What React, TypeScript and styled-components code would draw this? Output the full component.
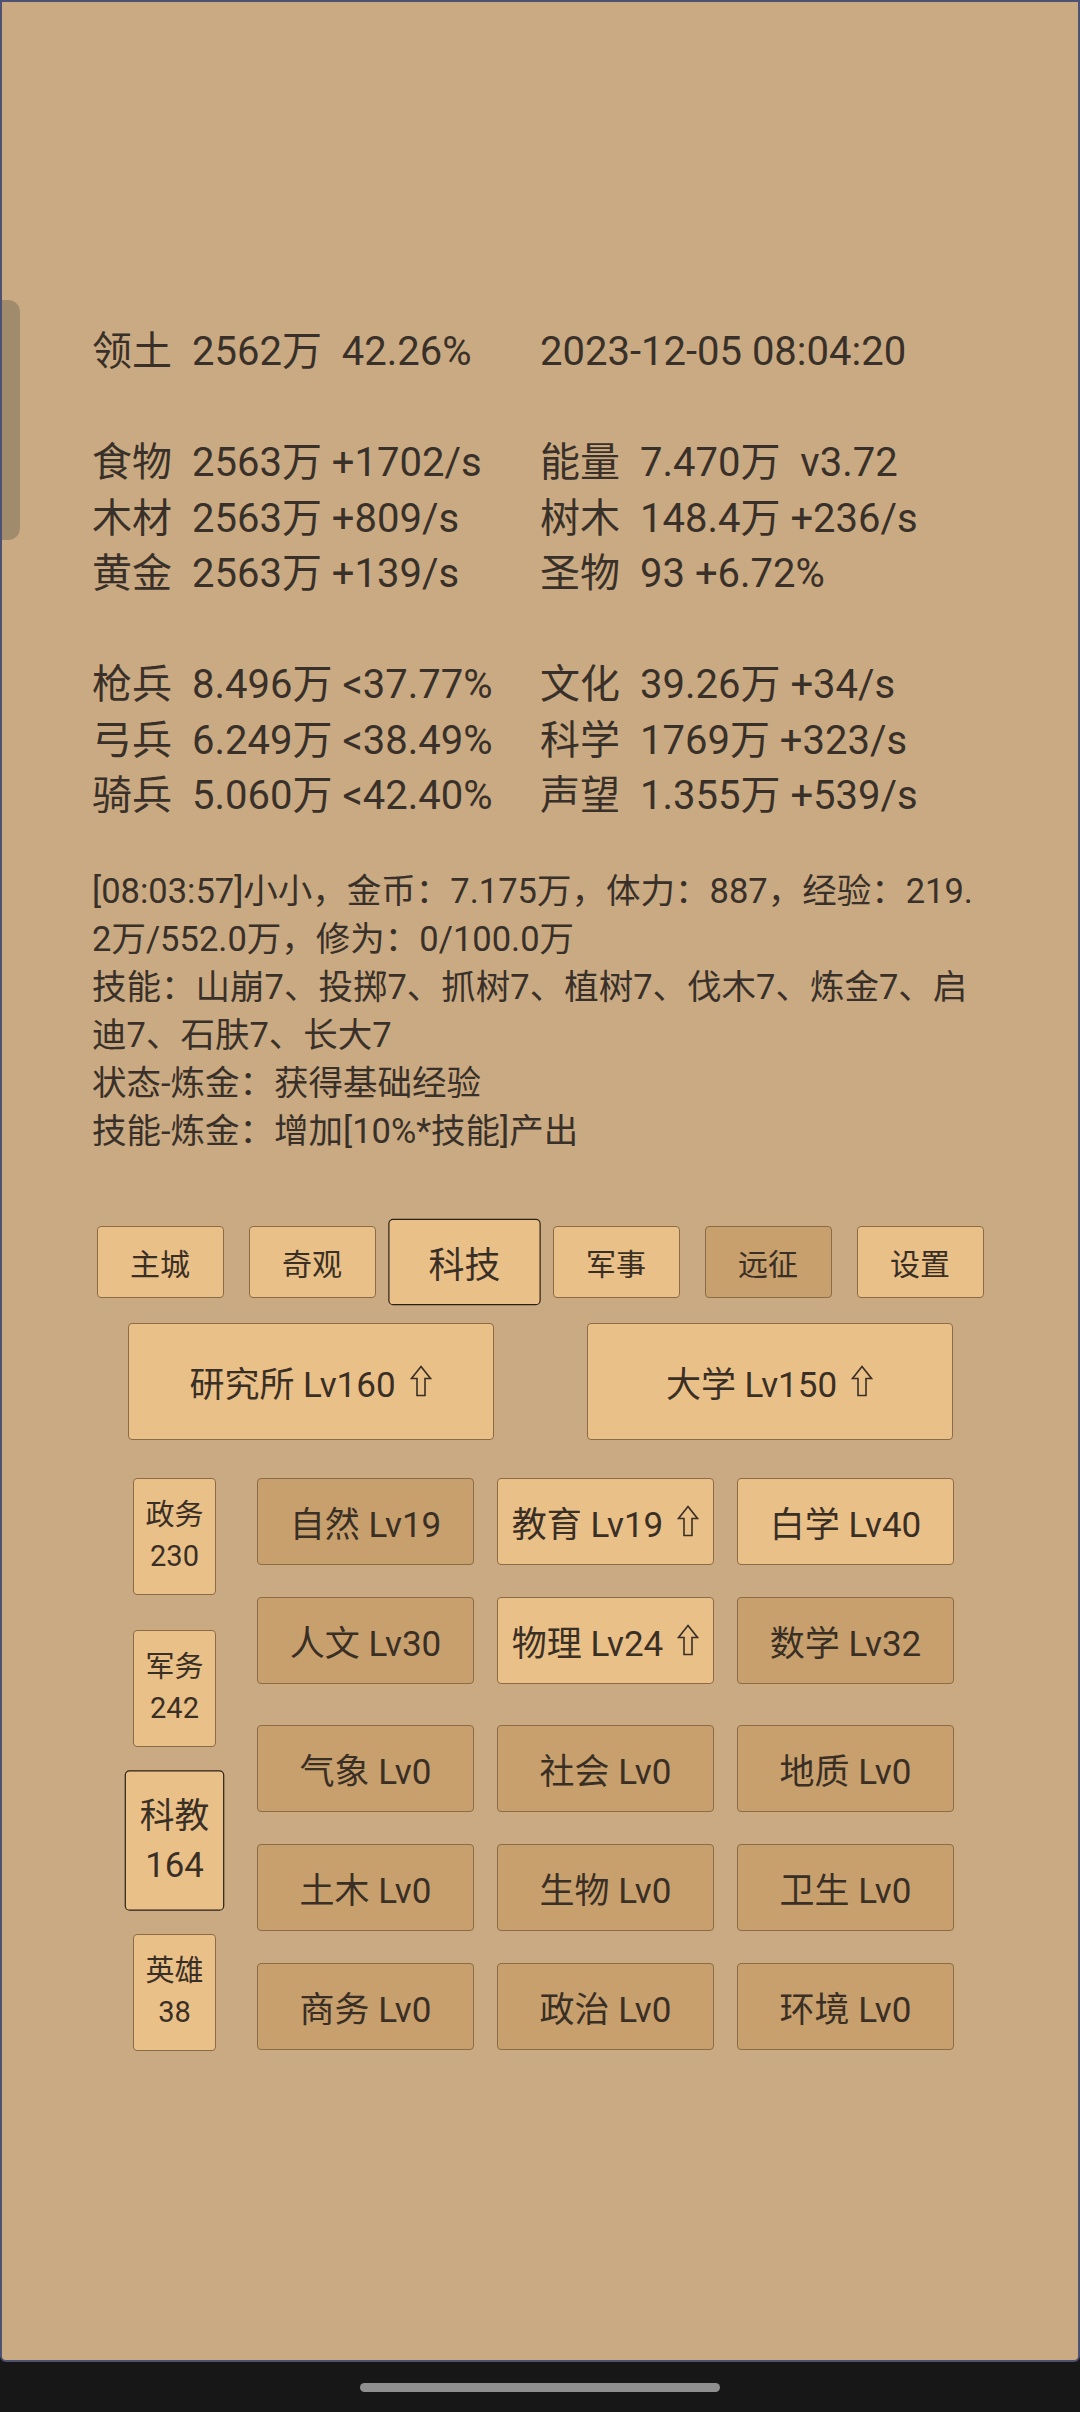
import React from "react";
import styled, { createGlobalStyle } from "styled-components";

const GlobalStyle = createGlobalStyle`
  html, body {
    margin: 0;
    padding: 0;
    background: #171717;
  }
  body {
    font-family: Roboto, "Noto Sans CJK SC", sans-serif;
  }
`;

const Screen = styled.div`
  width: 1080px;
  height: 2412px;
  display: flex;
  flex-direction: column;
  background: #171717;
`;

const Frame = styled.div`
  position: relative;
  box-sizing: border-box;
  height: 2362px;
  border: 2px solid #4d5272;
  border-radius: 0 0 6px 6px;
  background: #caaa82;
  padding-top: 322px;
  color: #393129;
`;

const ScrollTab = styled.div`
  position: absolute;
  left: 0;
  top: 298px;
  width: 18px;
  height: 240px;
  background: #a08c6c;
  border-radius: 0 12px 12px 0;
`;

const TextBlock = styled.div`
  padding-left: 90px;
`;

const Stats = styled.div`
  display: grid;
  grid-template-columns: 100px 348px 100px auto;
  font-size: 40px;
  line-height: 55.5px;
  white-space: pre;
`;

const Blank = styled.div`
  grid-column: 1 / -1;
  height: 55.5px;
`;

const Wide = styled.div`
  grid-column: 3 / -1;
`;

const Log = styled.div`
  margin-top: 43px;
  width: 888px;
  font-size: 34.5px;
  line-height: 48px;
  word-break: break-all;
`;

const NavBar = styled.div`
  margin-top: 71px;
  display: flex;
  justify-content: center;
  align-items: center;
  gap: 25px;
`;

const Tile = styled.div<{ $dark?: boolean; $active?: boolean }>`
  box-sizing: border-box;
  display: flex;
  align-items: center;
  justify-content: center;
  background: ${(p) => (p.$dark ? "#c8a06e" : "#eac089")};
  border: 1px solid ${(p) => (p.$active ? "#2c2117" : "#8c6b47")};
  border-radius: 4px;
  color: #3a2f24;
  white-space: nowrap;
  ${(p) => p.$active && "transform: scale(1.2);"}
`;

const NavButton = styled(Tile)`
  width: 127px;
  height: 72px;
  font-size: 30px;
`;

const BigRow = styled.div`
  margin-top: 25px;
  display: flex;
  justify-content: center;
  gap: 93px;
`;

const BigButton = styled(Tile)`
  width: 366px;
  height: 117px;
  font-size: 35px;
`;

const Section = styled.div`
  margin-top: 38px;
  padding-left: 131px;
  display: flex;
  gap: 41px;
`;

const SideColumn = styled.div`
  width: 83px;
  display: flex;
  flex-direction: column;
  gap: 35px;
`;

const SideButton = styled(Tile)`
  width: 83px;
  height: 117px;
  flex-direction: column;
  font-size: 29px;
  line-height: 41px;
  text-align: center;
`;

const TechArea = styled.div`
  display: flex;
  flex-direction: column;
  gap: 41px;
`;

const TechGroup = styled.div`
  display: grid;
  grid-template-columns: repeat(3, 217px);
  column-gap: 23px;
  row-gap: 32px;
`;

const TechButton = styled(Tile)`
  width: 217px;
  height: 87px;
  font-size: 35px;
`;

const ArrowIcon = styled.svg`
  width: 22px;
  height: 32px;
  margin-left: 14px;
  flex-shrink: 0;
`;

const HomeBar = styled.div`
  flex: 1;
  display: flex;
  align-items: center;
  justify-content: center;
`;

const HomePill = styled.div`
  width: 360px;
  height: 9px;
  border-radius: 5px;
  background: #8f8f8f;
`;

function UpArrow() {
  return (
    <ArrowIcon viewBox="0 0 22 32">
      <path
        d="M11 1.5 L20.5 13.5 L15 13.5 L15 30.5 L7 30.5 L7 13.5 L1.5 13.5 Z"
        fill="none"
        stroke="#3a2f24"
        strokeWidth="1.6"
      />
    </ArrowIcon>
  );
}

const resourceRows: [string, string, string, string][][] = [
  [
    ["食物", "2563万 +1702/s", "能量", "7.470万  v3.72"],
    ["木材", "2563万 +809/s", "树木", "148.4万 +236/s"],
    ["黄金", "2563万 +139/s", "圣物", "93 +6.72%"],
  ],
  [
    ["枪兵", "8.496万 <37.77%", "文化", "39.26万 +34/s"],
    ["弓兵", "6.249万 <38.49%", "科学", "1769万 +323/s"],
    ["骑兵", "5.060万 <42.40%", "声望", "1.355万 +539/s"],
  ],
];

const logLines = [
  "[08:03:57]小小，金币：7.175万，体力：887，经验：219.2万/552.0万，修为：0/100.0万",
  "技能：山崩7、投掷7、抓树7、植树7、伐木7、炼金7、启迪7、石肤7、长大7",
  "状态-炼金：获得基础经验",
  "技能-炼金：增加[10%*技能]产出",
];

const navItems = [
  { label: "主城" },
  { label: "奇观" },
  { label: "科技", active: true },
  { label: "军事" },
  { label: "远征", dark: true },
  { label: "设置" },
];

const sideItems = [
  { label: "政务", value: "230" },
  { label: "军务", value: "242" },
  { label: "科教", value: "164", active: true },
  { label: "英雄", value: "38" },
];

type Tech = { name: string; dark: boolean; up?: boolean };

const openTechs: Tech[] = [
  { name: "自然 Lv19", dark: true },
  { name: "教育 Lv19", dark: false, up: true },
  { name: "白学 Lv40", dark: false },
  { name: "人文 Lv30", dark: true },
  { name: "物理 Lv24", dark: false, up: true },
  { name: "数学 Lv32", dark: true },
];

const lockedTechs: Tech[] = [
  { name: "气象 Lv0", dark: true },
  { name: "社会 Lv0", dark: true },
  { name: "地质 Lv0", dark: true },
  { name: "土木 Lv0", dark: true },
  { name: "生物 Lv0", dark: true },
  { name: "卫生 Lv0", dark: true },
  { name: "商务 Lv0", dark: true },
  { name: "政治 Lv0", dark: true },
  { name: "环境 Lv0", dark: true },
];

export default function App() {
  return (
    <Screen>
      <GlobalStyle />
      <Frame>
        <ScrollTab />
        <TextBlock>
          <Stats>
            <div>领土</div>
            <div>2562万  42.26%</div>
            <Wide>2023-12-05 08:04:20</Wide>
            {resourceRows.map((group, gi) => (
              <React.Fragment key={gi}>
                <Blank />
                {group.map((row) =>
                  row.map((cell, ci) => <div key={row[0] + ci}>{cell}</div>)
                )}
              </React.Fragment>
            ))}
          </Stats>
          <Log>
            {logLines.map((line) => (
              <div key={line}>{line}</div>
            ))}
          </Log>
        </TextBlock>

        <NavBar>
          {navItems.map((item) => (
            <NavButton key={item.label} $active={item.active} $dark={item.dark}>
              {item.label}
            </NavButton>
          ))}
        </NavBar>

        <BigRow>
          <BigButton>
            研究所 Lv160
            <UpArrow />
          </BigButton>
          <BigButton>
            大学 Lv150
            <UpArrow />
          </BigButton>
        </BigRow>

        <Section>
          <SideColumn>
            {sideItems.map((item) => (
              <SideButton key={item.label} $active={item.active}>
                <span>{item.label}</span>
                <span>{item.value}</span>
              </SideButton>
            ))}
          </SideColumn>
          <TechArea>
            <TechGroup>
              {openTechs.map((t) => (
                <TechButton key={t.name} $dark={t.dark}>
                  {t.name}
                  {t.up && <UpArrow />}
                </TechButton>
              ))}
            </TechGroup>
            <TechGroup>
              {lockedTechs.map((t) => (
                <TechButton key={t.name} $dark={t.dark}>
                  {t.name}
                </TechButton>
              ))}
            </TechGroup>
          </TechArea>
        </Section>
      </Frame>
      <HomeBar>
        <HomePill />
      </HomeBar>
    </Screen>
  );
}
